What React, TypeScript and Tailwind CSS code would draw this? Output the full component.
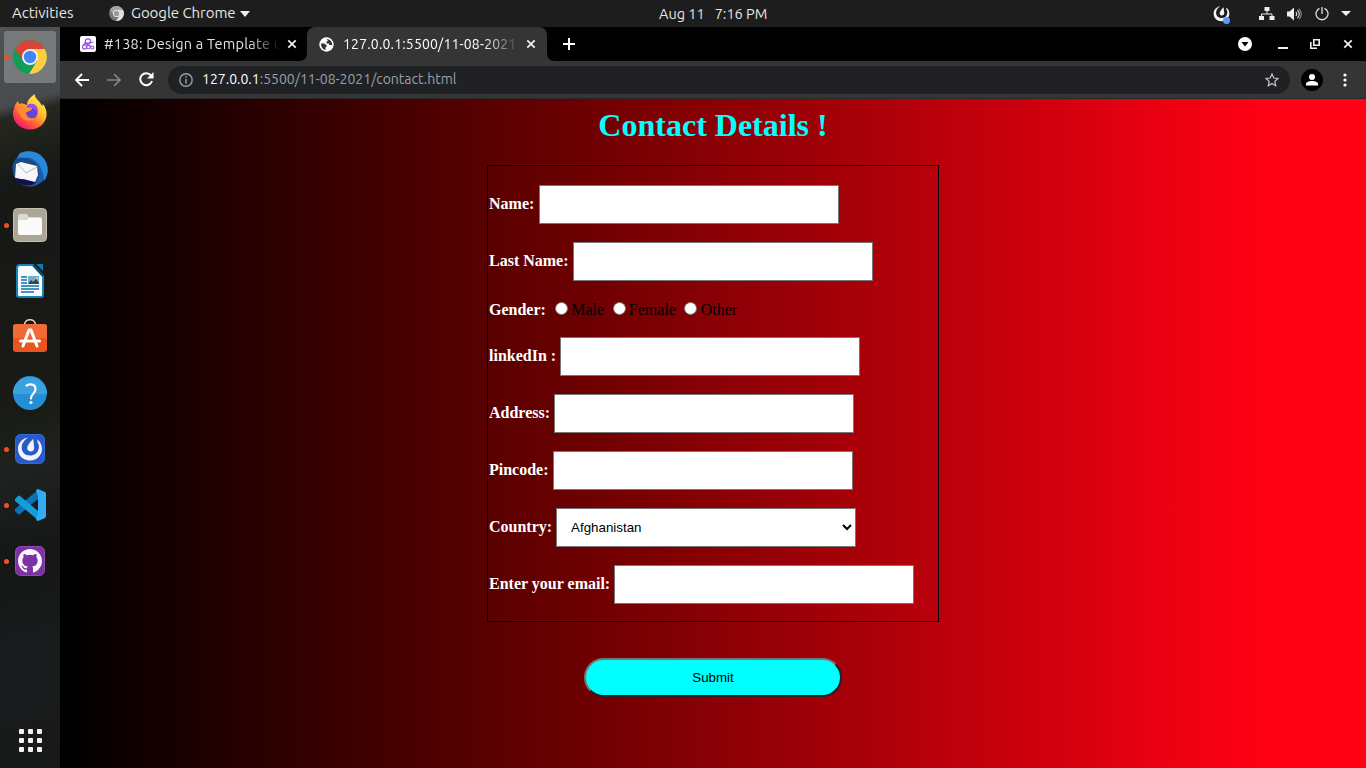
import React from "react";

const fieldBox = "h-[39px] w-[300px] shrink-0 rounded-none border border-[#767676] bg-white";

function Row({ label, top, gap = "mr-1", children }: { label: string; top: string; gap?: string; children?: React.ReactNode }) {
  return (
    <div className={"flex items-center " + top}>
      <b className={"mb-[2px] whitespace-pre leading-[18px] " + gap}>{label}</b>
      {children ?? <input type="text" className={fieldBox} />}
    </div>
  );
}

function Radio({ label, cls }: { label: string; cls: string }) {
  return (
    <label className={"flex items-center text-black " + cls}>
      <span className="mr-[3.3px] -mt-[3px] block h-[13px] w-[13px] rounded-full border border-[#767676] bg-white" />
      <span className="leading-[18px]">{label}</span>
    </label>
  );
}

function Chrome({ size, gray }: { size: number; gray?: boolean }) {
  const c = gray ? ["#a5a5a5", "#777", "#dedede", "#999"] : ["#dc4437", "#109d58", "#ffcd40", "#4285f4"];
  return (
    <svg width={size} height={size} viewBox="0 0 34 34">
      <circle cx="17" cy="17" r="17" fill={c[1]} />
      <path d="M2.2 8.7A17 17 0 0 1 31.8 9H17L10.5 21Z" fill={c[0]} />
      <path d="M17 9h14.8A17 17 0 0 1 16 34l8-13Z" fill={c[2]} />
      <circle cx="17" cy="17" r="8" fill="#f1f1f1" />
      <circle cx="17" cy="17" r="6.2" fill={c[3]} />
    </svg>
  );
}

function Firefox() {
  return (
    <svg width="34" height="36" viewBox="0 0 34 36">
      <defs>
        <linearGradient id="ff" x1=".85" y1=".1" x2=".2" y2="1">
          <stop offset="0" stopColor="#fff14a" />
          <stop offset=".35" stopColor="#ffbd2e" />
          <stop offset=".62" stopColor="#ff6a35" />
          <stop offset=".85" stopColor="#fb2f5b" />
          <stop offset="1" stopColor="#e31587" />
        </linearGradient>
      </defs>
      <path d="M1 15c0-3 2-6 4-8l1 3c3-1 5 0 8 1C14 6 18 3 21.500 0c.5 5 5 6 7.500 12l1-2c3 4 4 8 3.500 12C32 30 26 35.500 17 35.500S0 29 0 20c0-2 0-3 1-5Z" fill="url(#ff)" />
      <circle cx="17.500" cy="18.500" r="7.200" fill="#6b41d8" />
      <path d="M4 11c3-1.500 7-.5 9 2l6 .5c.5 3-3 3.500-6 5 0 5 5 7 10 5-4 5-14 4-16-3-2-3-4-6-3-9.500Z" fill="#ff8b2a" />
      <path d="M14 11c5-3 12 0 11 8-3-5-7-5-11-8Z" fill="#9a50f0" />
    </svg>
  );
}

function Thunderbird() {
  return (
    <svg width="36" height="36" viewBox="0 0 36 36">
      <circle cx="18" cy="18" r="17.500" fill="#1a5fae" />
      <path d="M8 2c9-4 19-1 24 6 5 8 5 15 0 22 0-10-4-18-13-23-5-1-9 0-12 3-2-2-1-6 1-8Z" fill="#2c87d6" />
      <path d="M2 10c4-4 8-4 12-3 10 2 14 9 13 19l-4 8C10 36 2 29 1 20Z" fill="#174a86" />
      <path d="m4 13 5-2 16 4 1 9-3 7-20-4Z" fill="#f6f6f6" />
      <path d="m6 13 8 9 11-6" fill="none" stroke="#b5bac3" />
      <path d="M2 26c5 3 9 1.500 13 3l9 2.500c-8 6-18 2-22-5.500Z" fill="#14104f" />
    </svg>
  );
}

function Files() {
  return (
    <svg width="34" height="34" viewBox="0 0 34 34">
      <rect x=".5" y=".5" width="33" height="33" rx="4" fill="#aaa594" stroke="#c5c0b1" />
      <path d="M5 8q0-2 2-2h7l2 3h11q2 0 2 2v14H5Z" fill="#ded9cf" />
      <path d="M5 12h9l2-2h11q2 0 2 2v13q0 2-2 2H7q-2 0-2-2Z" fill="#fafafa" />
    </svg>
  );
}

function Writer() {
  return (
    <svg width="28" height="34" viewBox="0 0 28 34">
      <path d="M4 1h13l10 11v19q0 2-2 2H3q-2 0-2-2V4q0-3 3-3Z" fill="#f7fbfd" stroke="#1683b9" strokeWidth="2" />
      <path d="M20 0h7v7Z" fill="#087cba" />
      <path d="m17 1 10 11" stroke="#064c73" strokeWidth="2" />
      <path d="M5 13h6M5 16h6M5 19h6M5 22h18M5 25h18M5 28h13" stroke="#0c73aa" strokeWidth="1.3" />
      <rect x="12" y="12" width="11" height="8" fill="#74add0" />
      <path d="m12 20 3-4 2 2 3-3 3 4v1Z" fill="#33434a" />
      <circle cx="21" cy="14" r="1" fill="#ffd23e" />
    </svg>
  );
}

function Software() {
  return (
    <svg width="34" height="33" viewBox="0 0 34 33">
      <path d="M11.500 6c0-7 11-7 11 0" fill="none" stroke="#f5d8b5" strokeWidth="1.500" />
      <rect y="5" width="34" height="28" rx="3" fill="#e95420" />
      <path d="M0 8q0-3 3-3h28q3 0 3 3v11H0Z" fill="#f06a35" />
      <path d="m10 27 6-16h2l6 16M7.500 22h19" fill="none" stroke="#fff" strokeWidth="3" strokeLinecap="round" strokeLinejoin="round" />
    </svg>
  );
}

function Help() {
  return (
    <svg width="34" height="34" viewBox="0 0 34 34">
      <circle cx="17" cy="17" r="17" fill="#258fd5" />
      <path d="M0 18a17 17 0 0 1 34 0Z" fill="#3ba1df" />
      <path d="M13.500 9.500c5-2.500 9-.5 9 3.500 0 5-5 5-4.500 9.500" fill="none" stroke="#fff" strokeWidth="2.2" strokeLinecap="round" />
      <circle cx="18" cy="26.500" r="1.600" fill="#fff" />
    </svg>
  );
}

function Mattermost({ size, plain }: { size: number; plain?: boolean }) {
  return (
    <svg width={size} height={size} viewBox={plain ? "2 1.500 26 26" : "0 0 30 30"}>
      {!plain && <rect x=".5" y=".5" width="29" height="29" rx="5" fill="#285ac9" stroke="#3669d7" />}
      <path d="M13 3.500C7 4.500 3 9 3 15c0 6.500 5 11.500 12 11.500S27 21 27 15c0-4-1.800-7.500-4.700-9.500l.2 2.700c1.300 2 1.800 4 1.300 6.300-1 4.500-4.300 7-8.800 7-5 0-8.300-3.500-8.300-8 0-4 2.500-7.500 6.300-10Z" fill="#f1f3f8" />
      <path d="M18.200 5c-2.200 2-6 6.500-6 9 0 2.200 1.600 3.600 3.500 3.600 2.200 0 3.500-1.600 3.500-3.900Z" fill="#f1f3f8" />
    </svg>
  );
}

function Code() {
  return (
    <svg width="32" height="32" viewBox="0 0 32 32">
      <path d="m1 22 3 3q1 1 2 0L24 10V1L1 20Z" fill="#0873b6" />
      <path d="m1 10 3-3q1-1 2 0l18 15v9L1 12Z" fill="#169bdc" />
      <path d="m24 0 7 3q1 .5 1 2v22q0 1.500-1 2l-7 3-2-1 2-7V8l-2-7Z" fill="#32adf1" />
    </svg>
  );
}

function Github() {
  return (
    <svg width="30" height="30" viewBox="0 0 30 30">
      <rect x=".5" y=".5" width="29" height="29" rx="5" fill="#7c32a2" stroke="#934ab5" />
      <g transform="translate(3 3)">
        <path fill="#f7f4fa" d="M12 0C5.370 0 0 5.370 0 12c0 5.310 3.435 9.795 8.205 11.385.6.105.825-.255.825-.57v-2.235c-3.338.724-4.042-1.416-4.042-1.416-.546-1.386-1.333-1.755-1.333-1.755-1.089-.744.084-.729.084-.729 1.205.084 1.838 1.237 1.838 1.237 1.070 1.834 2.809 1.304 3.495.997.107-.775.418-1.304.762-1.604-2.665-.3-5.466-1.332-5.466-5.930 0-1.310.465-2.380 1.235-3.220-.135-.303-.54-1.523.105-3.176 0 0 1.005-.322 3.300 1.230a11.500 11.500 0 0 1 6 0c2.280-1.552 3.285-1.230 3.285-1.230.645 1.653.24 2.873.12 3.176.765.84 1.230 1.910 1.230 3.220 0 4.610-2.805 5.625-5.475 5.920.42.360.81 1.096.81 2.220v3.285c0 .315.210.690.825.570C20.565 21.795 24 17.310 24 12c0-6.630-5.370-12-12-12Z" />
      </g>
    </svg>
  );
}

function Slot({ children, dot, active }: { children: React.ReactNode; dot?: boolean; active?: boolean }) {
  return (
    <div className="relative flex h-[56px] w-[60px] items-center justify-center">
      {active && <div className="absolute left-[4px] top-[2px] h-[52px] w-[52px] rounded-[3px] bg-[#77797b]" />}
      {dot && <i className="absolute left-[4px] top-[26px] h-[5px] w-[5px] rounded-full bg-[#e95420]" />}
      <div className="relative">{children}</div>
    </div>
  );
}

function Sidebar() {
  return (
    <aside className="flex h-[741px] w-[60px] shrink-0 flex-col justify-between bg-[linear-gradient(165deg,#505355_0px,#484b4d_78px,#26281f_90px,#171917_150px,#181816_240px,#191b15_380px,#202220_430px,#151716_520px,#191c1d_620px,#181818_760px)] pt-[2px]">
      <div>
        <Slot dot active><Chrome size={34} /></Slot>
        <Slot><div className="-mt-[2px]"><Firefox /></div></Slot>
        <Slot><Thunderbird /></Slot>
        <Slot dot><Files /></Slot>
        <Slot><Writer /></Slot>
        <Slot><div className="-mt-[4px]"><Software /></div></Slot>
        <Slot><Help /></Slot>
        <Slot dot><Mattermost size={30} /></Slot>
        <Slot dot><Code /></Slot>
        <Slot dot><Github /></Slot>
      </div>
      <div className="mb-[16px] ml-[18.5px] grid w-[23px] grid-cols-3 gap-[4px]">
        {Array.from({ length: 9 }, (_, i) => <i key={i} className="h-[5px] w-[5px] rounded-[1px] bg-[#f2f2f2]" />)}
      </div>
    </aside>
  );
}

function TopBar() {
  return (
    <header className="flex h-[27px] shrink-0 items-center bg-[#1d1d1d] text-[15px] text-[#e6e6e6]">
      <span className="ml-[12px] w-[97px] shrink-0 whitespace-nowrap">Activities</span>
      <Chrome size={15} gray />
      <span className="ml-[7px] w-[105px] shrink-0 whitespace-nowrap tracking-[-0.05px]">Google Chrome</span>
      <svg className="ml-[4px] shrink-0" width="10" height="6"><path d="M0 0h10L5 6Z" fill="#eee" /></svg>
      <span className="ml-[409px] w-[120px] shrink-0 whitespace-pre text-[14.500px]">{"Aug 11   7:16 PM"}</span>
      <div className="ml-[434px] flex items-center">
        <div className="relative h-[17px] w-[18px]">
          <Mattermost size={17} plain />
          <i className="absolute bottom-[-2px] right-[1px] h-[7px] w-[7px] rounded-full bg-[#569cff]" />
        </div>
        <svg className="ml-[28px]" width="16" height="14" viewBox="0 0 16 14"><path d="M5.500 0h5v4h-5ZM0 9h5v4H0ZM10.500 9h5v4h-5Z" fill="#eee" /><path d="M8 4v3M2.500 9V7h10.500v2" fill="none" stroke="#eee" /></svg>
        <svg className="ml-[12px]" width="17" height="14" viewBox="0 0 17 14"><path d="M0 4.500h2.500L7 .5v13l-4.500-4H0Z" fill="#eee" /><path d="M9 5q1.500 2 0 4" fill="none" stroke="#eee" strokeWidth="1.200" /><path d="M10.500 3q3.500 4 0 8" fill="none" stroke="#ccc" strokeWidth="1.200" /><path d="M12 1.500q4.500 5.500 0 11" fill="none" stroke="#999" /></svg>
        <svg className="ml-[11px]" width="14" height="14" viewBox="0 0 14 14"><path d="M4.500 1.300a6 6 0 1 0 5 0M7 0v7" fill="none" stroke="#ddd" strokeWidth="1.3" /></svg>
        <svg className="ml-[12px]" width="10" height="5"><path d="M0 0h10L5 5Z" fill="#eee" /></svg>
      </div>
    </header>
  );
}

function Close() {
  return <svg className="shrink-0" width="10" height="10" viewBox="0 0 10 10"><path d="m1.300 1.300 7.400 7.400m0-7.400L1.300 8.700" stroke="#f2f2f2" strokeWidth="1.700" /></svg>;
}

function Tabs() {
  return (
    <div className="flex h-[34px] items-center bg-black text-[14px] text-[#e2e2e2]">
      <div className="flex h-full w-[247px] items-center bg-black pl-[20px]">
        <svg className="shrink-0" width="16" height="16" viewBox="0 0 16 16"><rect width="16" height="16" rx="2" fill="#fff" /><g fill="none" stroke="#9252d9" strokeWidth="1.1"><circle cx="8" cy="5.500" r="2.600" /><circle cx="4.500" cy="11" r="2" /><circle cx="8.500" cy="11" r="1.800" /><circle cx="12.300" cy="11.500" r="1.500" /><path d="m2.500 9 5-2 6-1M4 6.500l7 4" /></g></svg>
        <span className="ml-[8px] w-[178px] overflow-hidden whitespace-nowrap text-[14.500px] tracking-[0.22px] [mask-image:linear-gradient(to_right,#000_145px,transparent_176px)]">#138: Design a Template u</span>
        <span className="ml-[5px]"><Close /></span>
      </div>
      <div className="relative flex h-full w-[240px] items-center rounded-t-[8px] bg-[#353535] pl-[12px] text-white">
        <svg className="absolute bottom-0 left-[-8px]" width="8" height="8"><path d="M8 0v8H0q8 0 8-8Z" fill="#353535" /></svg>
        <svg className="absolute bottom-0 right-[-8px]" width="8" height="8"><path d="M0 0v8h8q-8 0-8-8Z" fill="#353535" /></svg>
        <svg className="shrink-0" width="15" height="15" viewBox="0 0 15 15"><circle cx="7.500" cy="7.500" r="7.200" fill="#fff" /><path d="M2 6.500h3.500L8 9l-1.500 1.500V13C4 12.500 2 10 2 6.500ZM7.500 2l1.500 1.500L7.500 5v1.500H10V8h2.500l.7.800c.5-3.300-1.400-6.400-5.700-6.800Z" fill="#353535" /></svg>
        <span className="ml-[9px] w-[175px] overflow-hidden whitespace-nowrap tracking-[0.17px] [mask-image:linear-gradient(to_right,#000_140px,transparent_177px)]">127.0.0.1:5500/11-08-2021</span>
        <span className="ml-[8px]"><Close /></span>
      </div>
      <svg className="ml-[16px]" width="12" height="12"><path d="M6 0v12M0 6h12" stroke="#fff" strokeWidth="2" /></svg>
      <div className="ml-auto mr-[13px] flex items-center">
        <svg width="14" height="14"><circle cx="7" cy="7" r="7" fill="#fff" /><path d="M3.500 5h7L7 9.500Z" fill="#000" /></svg>
        <svg className="ml-[26px]" width="10" height="10"><path d="M0 9h10" stroke="#eee" strokeWidth="2" /></svg>
        <svg className="ml-[22px]" width="10" height="10"><path d="M3.800.8h5.400v5.400H3.800ZM.8 3v6.200H7" fill="none" stroke="#eee" strokeWidth="1.6" /></svg>
        <span className="ml-[23px]"><Close /></span>
      </div>
    </div>
  );
}

function Toolbar() {
  return (
    <div className="flex h-[38px] items-center border-b border-[#292929] bg-[#353535]">
      <svg className="ml-[15px]" width="14" height="14" viewBox="0 0 14 14"><path d="M14 7H1m6-6L1 7l6 6" fill="none" stroke="#fff" strokeWidth="1.9" /></svg>
      <svg className="ml-[18px]" width="14" height="14" viewBox="0 0 14 14"><path d="M0 7h13M7 1l6 6-6 6" fill="none" stroke="#868686" strokeWidth="1.7" /></svg>
      <svg className="ml-[18px]" width="15" height="15" viewBox="0 0 15 15"><path d="M13 9a6 6 0 1 1-1-5.500" fill="none" stroke="#fff" strokeWidth="2" /><path d="M14.500 0v6.500H8Z" fill="#fff" /></svg>
      <div className="ml-[14px] flex h-[28px] w-[1122px] items-center rounded-full bg-[#202124] pl-[11px] text-[14px]">
        <svg width="14" height="14" viewBox="0 0 14 14"><circle cx="7" cy="7" r="6.200" fill="none" stroke="#9aa0a6" strokeWidth="1.4" /><path d="M7 6v4.500M7 3v1.600" stroke="#9aa0a6" strokeWidth="1.5" /></svg>
        <span className="ml-[9px] whitespace-nowrap text-[#9aa0a6]"><span className="text-white">127.0.0.1</span>:5500/11-08-2021/contact.html</span>
        <svg className="ml-auto mr-[11px]" width="14" height="14" viewBox="0 0 14 14"><path d="m7 1 1.800 4 4.200.5-3.200 2.900.9 4.300L7 10.500l-3.700 2.200.9-4.300L1 5.500 5.200 5Z" fill="none" stroke="#c4c7c9" strokeWidth="1.2" /></svg>
      </div>
      <svg className="ml-[11px]" width="22" height="22"><circle cx="11" cy="11" r="11" fill="#000" /><circle cx="11" cy="8" r="3" fill="#fff" /><path d="M5 16.500V15c0-4 12-4 12 0v1.500Z" fill="#fff" /></svg>
      <svg className="ml-[19.500px]" width="4" height="14"><circle cx="2" cy="2" r="1.600" fill="#fff" /><circle cx="2" cy="7" r="1.600" fill="#fff" /><circle cx="2" cy="12" r="1.600" fill="#fff" /></svg>
    </div>
  );
}

export default function App() {
  return (
    <div className="flex h-[768px] w-[1366px] flex-col overflow-hidden font-['Ubuntu','Noto_Sans',sans-serif]">
      <TopBar />
      <div className="flex">
        <Sidebar />
        <div className="flex w-[1306px] shrink-0 flex-col">
          <Tabs />
          <Toolbar />
          <main className="flex h-[669px] flex-col items-center bg-[linear-gradient(to_right,#000_0%,#5f0000_35%,#ff0014_92%)] font-['Liberation_Serif',serif] text-[16px] text-white">
            <h1 className="mt-[8px] text-[32px] font-bold leading-[37px] text-[#00ffff]">Contact Details !</h1>
            <form className="mt-[21px] h-[457px] w-[452px] border border-black pl-[1px]">
              <Row label="Name:" top="mt-[19px]" gap="mr-[4.6px]" />
              <Row label="Last Name:" top="mt-[18px]" />
              <div className="mt-[20px] flex h-[18px] items-center">
                <b className="leading-[18px]">Gender:</b>
                <Radio label="Male" cls="ml-[9px]" />
                <Radio label="Female" cls="ml-[8.5px]" />
                <Radio label="Other" cls="ml-[8.5px]" />
              </div>
              <Row label="linkedIn :" top="mt-[18px]" />
              <Row label="Address:" top="mt-[18px]" />
              <Row label="Pincode:" top="mt-[18px]" />
              <Row label="Country:" top="mt-[18px]">
                <div className={"flex items-center justify-between pl-[14px] pr-[3px] font-['Liberation_Sans',sans-serif] text-[13.333px] text-black " + fieldBox}>
                  Afghanistan
                  <svg width="10" height="7" viewBox="0 0 10 7"><path d="m1 1 4 4 4-4" fill="none" stroke="#000" strokeWidth="2" /></svg>
                </div>
              </Row>
              <Row label="Enter your email:" top="mt-[18px]" />
            </form>
            <button className="mt-[36px] h-[39px] w-[258px] rounded-[20px] border-2 border-t-[#767676] border-l-[#767676] border-r-[#212121] border-b-[#212121] bg-[#00ffff] font-['Liberation_Sans',sans-serif] text-[13.333px] text-black">Submit</button>
          </main>
        </div>
      </div>
    </div>
  );
}
